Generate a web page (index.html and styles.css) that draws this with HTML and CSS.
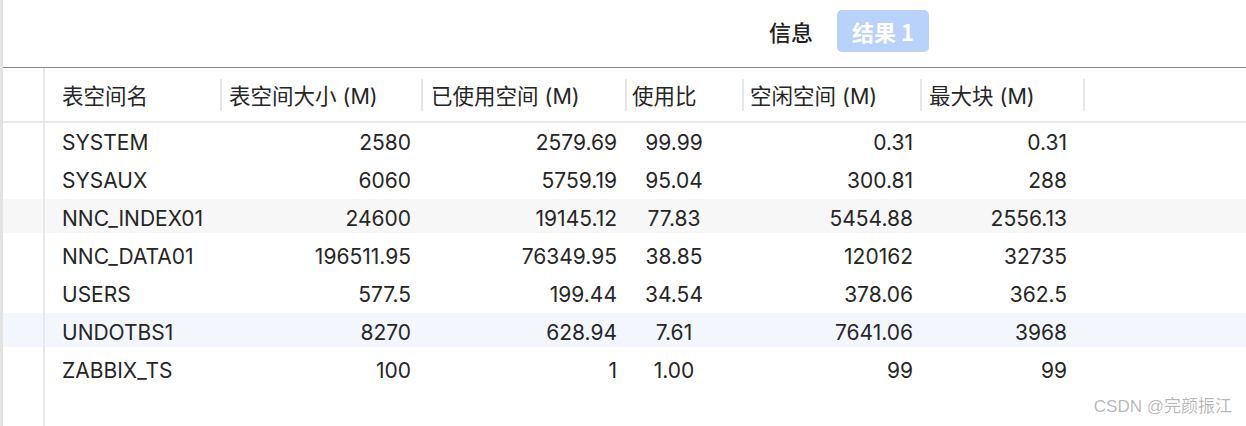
FILE: index.html
```html
<!DOCTYPE html>
<html lang="zh-CN">
<head>
<meta charset="utf-8">
<title>表空间</title>
<link rel="stylesheet" href="styles.css">
</head>
<body>
<div class="app">
  <div class="toolbar">
    <span class="tab">信息</span>
    <span class="tab tab-active">结果 1</span>
  </div>
  <div class="table">
    <div class="row head">
      <div class="gut"></div>
      <div class="hc c1">表空间名</div>
      <div class="hc c2">表空间大小 (M)</div>
      <div class="hc c3">已使用空间 (M)</div>
      <div class="hc c4">使用比</div>
      <div class="hc c5">空闲空间 (M)</div>
      <div class="hc c6">最大块 (M)</div>
      <div class="rest"></div>
    </div>
    <div class="row data">
      <div class="gut"></div>
      <div class="dc c1">SYSTEM</div><div class="dc c2">2580</div><div class="dc c3">2579.69</div><div class="dc c4">99.99</div><div class="dc c5">0.31</div><div class="dc c6">0.31</div><div></div>
    </div>
    <div class="row data">
      <div class="gut"></div>
      <div class="dc c1">SYSAUX</div><div class="dc c2">6060</div><div class="dc c3">5759.19</div><div class="dc c4">95.04</div><div class="dc c5">300.81</div><div class="dc c6">288</div><div></div>
    </div>
    <div class="row data stripe-gray">
      <div class="gut"></div>
      <div class="dc c1">NNC_INDEX01</div><div class="dc c2">24600</div><div class="dc c3">19145.12</div><div class="dc c4">77.83</div><div class="dc c5">5454.88</div><div class="dc c6">2556.13</div><div></div>
    </div>
    <div class="row data">
      <div class="gut"></div>
      <div class="dc c1">NNC_DATA01</div><div class="dc c2">196511.95</div><div class="dc c3">76349.95</div><div class="dc c4">38.85</div><div class="dc c5">120162</div><div class="dc c6">32735</div><div></div>
    </div>
    <div class="row data">
      <div class="gut"></div>
      <div class="dc c1">USERS</div><div class="dc c2">577.5</div><div class="dc c3">199.44</div><div class="dc c4">34.54</div><div class="dc c5">378.06</div><div class="dc c6">362.5</div><div></div>
    </div>
    <div class="row data stripe-blue">
      <div class="gut"></div>
      <div class="dc c1">UNDOTBS1</div><div class="dc c2">8270</div><div class="dc c3">628.94</div><div class="dc c4">7.61</div><div class="dc c5">7641.06</div><div class="dc c6">3968</div><div></div>
    </div>
    <div class="row data">
      <div class="gut"></div>
      <div class="dc c1">ZABBIX_TS</div><div class="dc c2">100</div><div class="dc c3">1</div><div class="dc c4">1.00</div><div class="dc c5">99</div><div class="dc c6">99</div><div></div>
    </div>
    <div class="row filler">
      <div class="gut"></div>
    </div>
  </div>
  <div class="watermark">CSDN @完颜振江</div>
</div>
</body>
</html>
```
FILE: styles.css
```css
html, body {
  margin: 0;
  padding: 0;
}
body {
  font-family: Inter, "Noto Sans CJK SC", sans-serif;
  color: #262626;
  background: #fff;
}
.app {
  position: relative;
  height: 426px;
  border-left: 3px solid #e3e3e3;
  display: flex;
  flex-direction: column;
  overflow: hidden;
}
.toolbar {
  box-sizing: border-box;
  height: 68px;
  border-bottom: 1px solid #8a8a8a;
  display: flex;
  align-items: flex-start;
  padding: 10px 0 0 766px;
}
.tab {
  height: 42px;
  display: flex;
  align-items: center;
  font-size: 22px;
  font-family: "Noto Sans CJK SC", Inter, sans-serif;
  font-weight: 500;
  color: #1f1f1f;
}
.tab-active {
  box-sizing: border-box;
  width: 92px;
  margin-left: 24px;
  justify-content: center;
  border-radius: 5px;
  background: #b9d2fb;
  color: #fff;
  font-weight: 600;
}
.table {
  flex: 1;
  display: flex;
  flex-direction: column;
}
.row {
  display: grid;
  grid-template-columns: 42px 177px 201px 204px 117px 178px 163px 1fr;
  font-size: 21px;
  white-space: nowrap;
}
.gut {
  align-self: stretch;
  box-sizing: border-box;
  border-right: 2px solid #e8e8e8;
}
.head {
  height: 53px;
  align-items: center;
  border-bottom: 2px solid #e8e8e8;
  font-size: 21.5px;
}
.hc {
  box-sizing: border-box;
  height: 32px;
  display: flex;
  align-items: center;
  border-right: 2px solid #e6e6e6;
  padding-left: 7px;
}
.hc.c1 { padding-left: 17px; }
.hc.c3 { padding-left: 8px; }
.hc.c4 { padding-left: 5px; }
.hc.c5 { padding-left: 6px; }
.data {
  height: 38px;
  align-items: center;
}
.stripe-gray {
  background: linear-gradient(#f7f7f7, #f7f7f7) top left / 100% 34px no-repeat;
}
.stripe-blue {
  background: linear-gradient(#f3f7fd, #f3f7fd) top left / 100% 34px no-repeat;
}
.dc {
  text-align: right;
}
.dc.c1 { text-align: left; padding-left: 17px; }
.dc.c2 { padding-right: 12px; }
.dc.c3 { padding-right: 10px; }
.dc.c4 { text-align: center; padding-right: 23px; }
.dc.c5 { padding-right: 9px; }
.dc.c6 { padding-right: 18px; }
.filler {
  flex: 1;
}
.watermark {
  position: absolute;
  right: 14px;
  bottom: 9px;
  font-size: 17px;
  color: rgba(0, 0, 0, 0.3);
  font-family: "Liberation Sans", "Noto Sans CJK SC", sans-serif;
}
```
